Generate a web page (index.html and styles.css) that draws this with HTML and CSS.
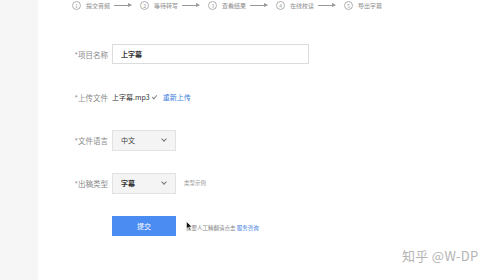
FILE: index.html
```html
<!DOCTYPE html>
<html lang="zh">
<head>
    <meta charset="UTF-8">
    <title>上传字幕</title>
    <link rel="stylesheet" href="styles.css">
</head>
<body>
    <div class="sidebar"></div>
    <div class="main">
        <div class="steps">
            <span class="step"><span class="num">1</span>提交音频</span>
            <span class="arrow"></span>
            <span class="step"><span class="num">2</span>等待转写</span>
            <span class="arrow"></span>
            <span class="step"><span class="num">3</span>查看结果</span>
            <span class="arrow"></span>
            <span class="step"><span class="num">4</span>在线校读</span>
            <span class="arrow"></span>
            <span class="step"><span class="num">5</span>导出字幕</span>
        </div>

        <div class="form">
            <div class="row">
                <label>*项目名称</label>
                <div class="input">上字幕</div>
            </div>
            <div class="row">
                <label>*上传文件</label>
                <span class="file">上字幕.mp3</span>
                <span class="check"></span>
                <a class="link">重新上传</a>
            </div>
            <div class="row">
                <label>*文件语言</label>
                <div class="select">中文<span class="caret"></span></div>
            </div>
            <div class="row">
                <label>*出稿类型</label>
                <div class="select bold">字幕<span class="caret"></span></div>
                <span class="hint">类型示例</span>
            </div>
            <div class="row">
                <label></label>
                <button>提交</button>
                <span class="note">需要人工精翻请点击 <a class="link">服务咨询</a></span>
            </div>
        </div>
    </div>

    <svg class="cursor" width="7" height="10" viewBox="0 0 7 10">
        <path d="M0.5 0.5 L0.5 8 L2.3 6.3 L3.6 9.2 L4.8 8.7 L3.5 5.9 L6 5.9 Z" fill="#111" stroke="#fff" stroke-width="0.6"/>
    </svg>
    <div class="watermark">知乎 @W-DP</div>
</body>
</html>
```

FILE: styles.css
```css
* {
    box-sizing: border-box;
}
body {
    margin: 0;
    width: 500px;
    height: 280px;
    display: flex;
    font-family: "Noto Sans CJK SC", "Liberation Sans", sans-serif;
    background: #fff;
    color: #555;
    overflow: hidden;
    position: relative;
}
.sidebar {
    width: 38px;
    background: #f6f6f6;
}
.main {
    flex: 1;
    display: flex;
    flex-direction: column;
}
.steps {
    height: 11px;
    display: flex;
    align-items: center;
    padding-left: 34px;
    font-size: 6px;
    color: #8a8a8a;
}
.step {
    display: flex;
    align-items: center;
}
.num {
    width: 9px;
    height: 9px;
    border: 1px solid #b0b0b0;
    border-radius: 50%;
    display: inline-flex;
    align-items: center;
    justify-content: center;
    font-size: 5px;
    margin-right: 5px;
    color: #999;
}
.arrow {
    width: 17px;
    height: 1px;
    background: #999;
    margin: 0 9px 0 4px;
    position: relative;
}
.arrow::after {
    content: "";
    position: absolute;
    right: -1px;
    top: -2px;
    border-left: 4px solid #999;
    border-top: 2px solid transparent;
    border-bottom: 2px solid transparent;
}
.form {
    margin-top: 33px;
    display: flex;
    flex-direction: column;
    gap: 23px;
}
.row {
    display: flex;
    align-items: center;
    height: 20px;
    font-size: 7px;
}
label {
    width: 74px;
    text-align: right;
    padding-right: 4px;
    color: #8a8a8a;
    font-size: 7.5px;
}
.input {
    width: 197px;
    height: 20px;
    border: 1px solid #dcdcdc;
    display: flex;
    align-items: center;
    padding-left: 8px;
    font-weight: bold;
    color: #333;
}
.file {
    color: #333;
    font-size: 7px;
}
.check {
    width: 3px;
    height: 5px;
    border-right: 1px solid #888;
    border-bottom: 1px solid #888;
    transform: rotate(40deg);
    margin: -2px 7px 0 3px;
}
.link {
    color: #3b7de0;
}
.select {
    width: 64px;
    height: 21px;
    border: 1px solid #e2e2e2;
    background: #f4f4f4;
    display: flex;
    align-items: center;
    justify-content: space-between;
    padding: 0 9px 0 8px;
    color: #444;
}
.select.bold {
    font-weight: bold;
    color: #333;
}
.caret {
    width: 4px;
    height: 4px;
    border-right: 1px solid #777;
    border-bottom: 1px solid #777;
    transform: rotate(45deg);
    margin-top: -3px;
}
.hint {
    margin-left: 8px;
    font-size: 5.5px;
    color: #999;
}
button {
    width: 64px;
    height: 20px;
    border: none;
    background: #4b8cf2;
    color: #fff;
    font-family: inherit;
    font-size: 7px;
    padding: 0;
}
.note {
    margin-left: 10px;
    margin-top: 3px;
    font-size: 5.5px;
    color: #888;
}
.cursor {
    position: absolute;
    left: 186px;
    top: 221px;
}
.watermark {
    position: absolute;
    left: 402px;
    top: 246px;
    font-size: 13px;
    color: #b4b4b4;
    letter-spacing: 0.3px;
}
```
